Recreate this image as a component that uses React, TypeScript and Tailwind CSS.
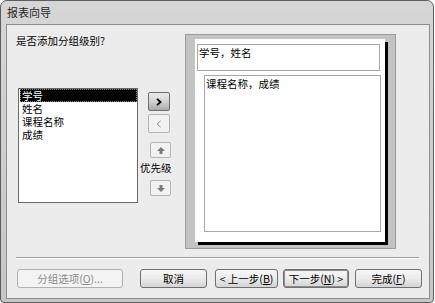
const btn =
  "h-[19px] rounded-[3px] border border-[#707070] bg-linear-to-b from-[#f7f7f7] via-[#ebebeb] to-[#d4d4d4] text-center text-[10.5px] leading-[17px] text-black";

function Up({ down }: { down?: boolean }) {
  return (
    <svg width="8" height="7" viewBox="0 0 8 7" className={down ? "rotate-180" : ""}>
      <path d="M4 0 L8 4 H5.5 V7 H2.5 V4 H0 Z" fill="#7a7a7a" />
    </svg>
  );
}

export default function App() {
  return (
    <div className="h-[303px] w-[435px] bg-white font-['Noto_Sans_CJK_SC',sans-serif] text-black">
      <div className="flex h-[303px] w-[434px] flex-col rounded-t-[7px] rounded-b-[4px] border border-[#5e5e5e] bg-linear-to-b from-[#d6d6d6] to-[#c6c6c6]">
        {/* Title */}
        <div className="h-[23px] pl-[6px] pt-[3px] text-[11px] leading-[16px] text-[#1e1e1e]">报表向导</div>

        {/* Client */}
        <div className="mb-[3px] ml-[5px] mr-[3px] flex flex-1 flex-col border border-[#8e8e8e] bg-[#ececec]">
          <div className="flex h-[224px]">
            {/* Left */}
            <div className="flex w-[178px] flex-col">
              <div className="ml-[9px] mt-[9px] text-[10.5px] leading-[14px]">是否添加分组级别?</div>
              <div className="ml-[11px] mt-[40px] flex">
                <div className="h-[115px] w-[120px] border border-[#6a6a6a] bg-white pl-px text-[10.5px] leading-[13px]">
                  <div className="h-[13px] border border-dotted border-[#888] bg-black pl-px leading-[11px] text-white">学号</div>
                  <div className="pl-[2px]">姓名</div>
                  <div className="pl-[2px]">课程名称</div>
                  <div className="pl-[2px]">成绩</div>
                </div>
                <div className="ml-[2px] flex flex-col">
                  <div className="ml-[8px] mt-[4px] flex h-[19px] w-[22px] items-center justify-center rounded-[2px] border border-[#6e6e6e] bg-linear-to-b from-[#ececec] via-[#d2d2d2] to-[#a9a9a9]">
                    <svg width="6" height="8" viewBox="0 0 6 8">
                      <path d="M1 0.8 L4.6 4 L1 7.2" fill="none" stroke="#000" strokeWidth="1.8" />
                    </svg>
                  </div>
                  <div className="ml-[8px] mt-[3px] flex h-[19px] w-[22px] items-center justify-center rounded-[2px] border border-[#b4b4b4] bg-[#f2f2f2]">
                    <svg width="6" height="8" viewBox="0 0 6 8">
                      <path d="M4.6 0.8 L1.2 4 L4.6 7.2" fill="none" stroke="#8a8a8a" strokeWidth="1" />
                    </svg>
                  </div>
                  <div className="ml-[10px] mt-[9px] flex h-[16px] w-[21px] items-center justify-center rounded-[2px] border border-[#b4b4b4] bg-[#f2f2f2]">
                    <Up />
                  </div>
                  <div className="mt-[3px] text-[10.5px] leading-[14px]">优先级</div>
                  <div className="ml-[10px] mt-[5px] flex h-[16px] w-[21px] items-center justify-center rounded-[2px] border border-[#b4b4b4] bg-[#f2f2f2]">
                    <Up down />
                  </div>
                </div>
              </div>
            </div>

            {/* Preview */}
            <div className="mt-[9px] h-[215px] w-[211px] border border-[#9c9c9c] bg-[#c3c3c3] pl-[9px] pt-[4px]">
              <div className="h-[203px] w-[190px] bg-white pl-[2px] pt-[5px] shadow-[3px_3px_0_#000] text-[10.5px] leading-[14px]">
                <div className="h-[27px] w-[183px] border border-[#a8a8a8] pl-px pt-[1px]">学号，姓名</div>
                <div className="ml-[7px] mt-[4px] h-[157px] w-[177px] border border-[#a8a8a8] pl-px pt-[1px]">课程名称，成绩</div>
              </div>
            </div>
          </div>

          {/* Separator */}
          <div className="ml-[9px] mr-[10px] mt-[8px] h-[2px] border-t border-[#a0a0a0] bg-white" />

          {/* Buttons */}
          <div className="mt-[10px] flex">
            <div className="ml-[10px] h-[19px] w-[106px] rounded-[3px] border border-[#b0b0b0] bg-[#f3f3f3] text-center text-[10.5px] leading-[17px] text-[#8a8a8a]">
              分组选项(<span className="underline">O</span>)...
            </div>
            <div className={`${btn} ml-[17px] w-[67px]`}>取消</div>
            <div className={`${btn} ml-[8px] w-[63px]`}>
              &lt; 上一步(<span className="underline">B</span>)
            </div>
            <div className={`${btn} ml-[5px] w-[66px] border-[#333] shadow-[inset_0_0_0_1px_#8c8c8c]`}>
              下一步(<span className="underline">N</span>) &gt;
            </div>
            <div className={`${btn} ml-[6px] w-[67px]`}>
              完成(<span className="underline">F</span>)
            </div>
          </div>
        </div>
      </div>
    </div>
  );
}
